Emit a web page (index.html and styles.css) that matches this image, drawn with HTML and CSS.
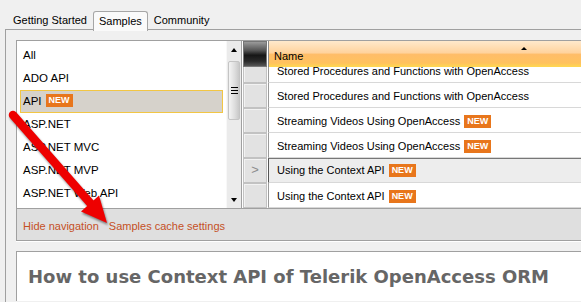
FILE: index.html
```html
<!DOCTYPE html>
<html>
<head>
<meta charset="utf-8">
<link rel="stylesheet" href="styles.css">
</head>
<body>
<div class="tabs">
  <span class="tab">Getting Started</span>
  <span class="tab active">Samples</span>
  <span class="tab">Community</span>
</div>
<div class="panel">
  <div class="browser">
    <div class="listbox">
      <div class="items">
        <div class="item">All</div>
        <div class="item">ADO API</div>
        <div class="item sel">API<span class="badge">NEW</span></div>
        <div class="item">ASP.NET</div>
        <div class="item">ASP.NET MVC</div>
        <div class="item">ASP.NET MVP</div>
        <div class="item">ASP.NET Web API</div>
      </div>
      <div class="scroll">
        <div class="sbtn"><span class="tri up"></span></div>
        <div class="thumb"><span class="grip"></span></div>
        <div class="sspace"></div>
        <div class="sbtn"><span class="tri down"></span></div>
      </div>
    </div>
    <div class="grid">
      <div class="ghead">
        <div class="corner"></div>
        <div class="hcell">Name<span class="sort"></span></div>
      </div>
      <div class="gbody">
        <div class="row first"><div class="rh"></div><div class="cell">Stored Procedures and Functions with OpenAccess</div></div>
        <div class="row"><div class="rh"></div><div class="cell">Stored Procedures and Functions with OpenAccess</div></div>
        <div class="row"><div class="rh"></div><div class="cell">Streaming Videos Using OpenAccess<span class="badge">NEW</span></div></div>
        <div class="row"><div class="rh"></div><div class="cell">Streaming Videos Using OpenAccess<span class="badge">NEW</span></div></div>
        <div class="row sel"><div class="rh">&gt;</div><div class="cell">Using the Context API<span class="badge">NEW</span></div></div>
        <div class="row"><div class="rh"></div><div class="cell">Using the Context API<span class="badge">NEW</span></div></div>
      </div>
    </div>
  </div>
  <div class="navbar">
    <a class="link">Hide navigation</a>
    <a class="link">Samples cache settings</a>
  </div>
  <div class="content">
    <h1 class="title">How to use Context API of Telerik OpenAccess ORM</h1>
  </div>
</div>
<svg class="arrow" width="581" height="302" viewBox="0 0 581 302">
  <line x1="13" y1="115" x2="91" y2="204" stroke="#ee0000" stroke-width="8.5" stroke-linecap="round"/>
  <polygon points="107,223 81,211.5 99,195.5" fill="#ee0000"/>
</svg>
</body>
</html>
```
FILE: styles.css
```css
html, body { margin: 0; padding: 0; }
body {
  width: 581px; height: 302px; overflow: hidden;
  background: #f0f0f0;
  font-family: "Liberation Sans", Arial, sans-serif;
  font-size: 11px; color: #000;
  position: relative;
}
.tabs { display: flex; align-items: flex-start; padding: 11px 0 0 7px; height: 18px; }
.tab { padding: 0 6px; line-height: 19px; height: 18px; white-space: nowrap; }
.tab.active {
  position: relative; z-index: 2;
  background: #fafafa;
  border: 1px solid #a6a6a6; border-bottom: none;
  border-radius: 3px 3px 0 0;
  height: 19px; line-height: 18px; padding: 0 5px;
}
.panel {
  margin-left: 5px;
  border-top: 1px solid #a0a0a0; border-left: 1px solid #a0a0a0;
  padding: 10px 0 0 10px;
  height: 262px;
}
.browser { display: flex; height: 169px; }
.listbox {
  display: flex; width: 226px; box-sizing: border-box;
  border: 1px solid #a0a0a0; background: #fff;
}
.items { flex: 1; padding: 3px 3px 0 3px; overflow: hidden; }
.item {
  height: 23px; line-height: 21px; box-sizing: border-box;
  border: 1px solid transparent; padding: 0 2px;
  font-size: 11.5px; white-space: nowrap;
}
.item.sel { background: #d6d2cb; border-color: #f2c644; }
.badge {
  display: inline-block; background: #e8761c; color: #fff;
  font-weight: bold; font-size: 9px; line-height: 13px; height: 13px;
  padding: 0 3px; margin-left: 4px; vertical-align: middle;
  position: relative; top: -1px;
}
.scroll {
  width: 14px; background: #ebebeb; display: flex; flex-direction: column;
  border-left: 1px solid #f8f8f8;
}
.sbtn { height: 17px; display: flex; align-items: center; justify-content: center; }
.tri { width: 0; height: 0; border-left: 3px solid transparent; border-right: 3px solid transparent; }
.tri.up { border-bottom: 4px solid #000; }
.tri.down { border-top: 4px solid #000; }
.thumb {
  margin: 3px 1px 0 1px; height: 57px;
  background: linear-gradient(90deg, #f4f4f4, #dcdcdc 60%, #c8c8c8);
  border: 1px solid #c4c4c4; border-radius: 2px;
  display: flex; align-items: center; justify-content: center;
}
.grip {
  width: 7px; height: 5px;
  border-top: 1px solid #000; border-bottom: 1px solid #000;
  background: linear-gradient(#000, #000) center / 100% 1px no-repeat;
}
.sspace { flex: 1; }
.grid {
  flex: 1; min-width: 0; display: flex; flex-direction: column;
  border-top: 1px solid #a0a0a0; border-bottom: 1px solid #a0a0a0;
  background: #fff;
}
.ghead { display: flex; height: 26px; }
.corner {
  width: 24px; margin: 0 1px; box-sizing: border-box;
  border: 1px solid #777;
  background: linear-gradient(#9a9a9a, #555 35%, #161616 55%, #2a2a2a 80%, #555);
}
.hcell {
  flex: 1; position: relative; padding: 0 5px;
  border-left: 1px solid #8a8a8a;
  background: linear-gradient(#ffe9cc 0%, #ffd39d 45%, #ffbd68 52%, #ffc25e 85%, #ffd94f 100%);
  line-height: 31px; white-space: nowrap;
}
.sort {
  position: absolute; left: 252px; top: 6px; width: 0; height: 0;
  border-left: 3px solid transparent; border-right: 3px solid transparent;
  border-bottom: 3px solid #000;
}
.gbody { height: 141px; overflow: hidden; }
.row { display: flex; height: 25px; }
.row.first { margin-top: -9px; }
.rh {
  width: 24px; margin: 0 1px; box-sizing: border-box;
  border: 1px solid #c2c2c2; background: #e2e2e2;
  box-shadow: inset 1px 1px 0 #f2f2f2;
  color: #8c8c8c; font-size: 13px; line-height: 22px; text-align: center;
}
.cell {
  flex: 1; box-sizing: border-box;
  border-left: 1px solid #9a9a9a; border-bottom: 1px solid #d8d8d8;
  padding-left: 8px; line-height: 26px; white-space: nowrap;
}
.row.sel .cell { background: #ededed; border-top: 1px solid #777; border-left-color: #555; line-height: 23px; }
.navbar {
  height: 32px; box-sizing: border-box;
  background: #dfdfdf;
  border-left: 1px solid #a0a0a0; border-bottom: 1px solid #a0a0a0;
  box-shadow: 0 1px 0 #fff;
  display: flex; align-items: center; gap: 10px; padding: 2px 0 0 6px;
}
.link { color: #c5501f; font-size: 11px; }
.content {
  margin-top: 10px; background: #fff;
  border-top: 1px solid #a0a0a0; border-left: 1px solid #a0a0a0;
  padding: 15px 0 0 11px; height: 34px;
}
.title {
  margin: 0; font-family: "DejaVu Sans", Verdana, sans-serif;
  font-weight: bold; font-size: 18px; line-height: 20px; color: #666;
  white-space: nowrap;
}
.arrow {
  position: absolute; left: 0; top: 0; pointer-events: none;
  filter: drop-shadow(1px 2px 1px rgba(0,0,0,0.45));
}
```
